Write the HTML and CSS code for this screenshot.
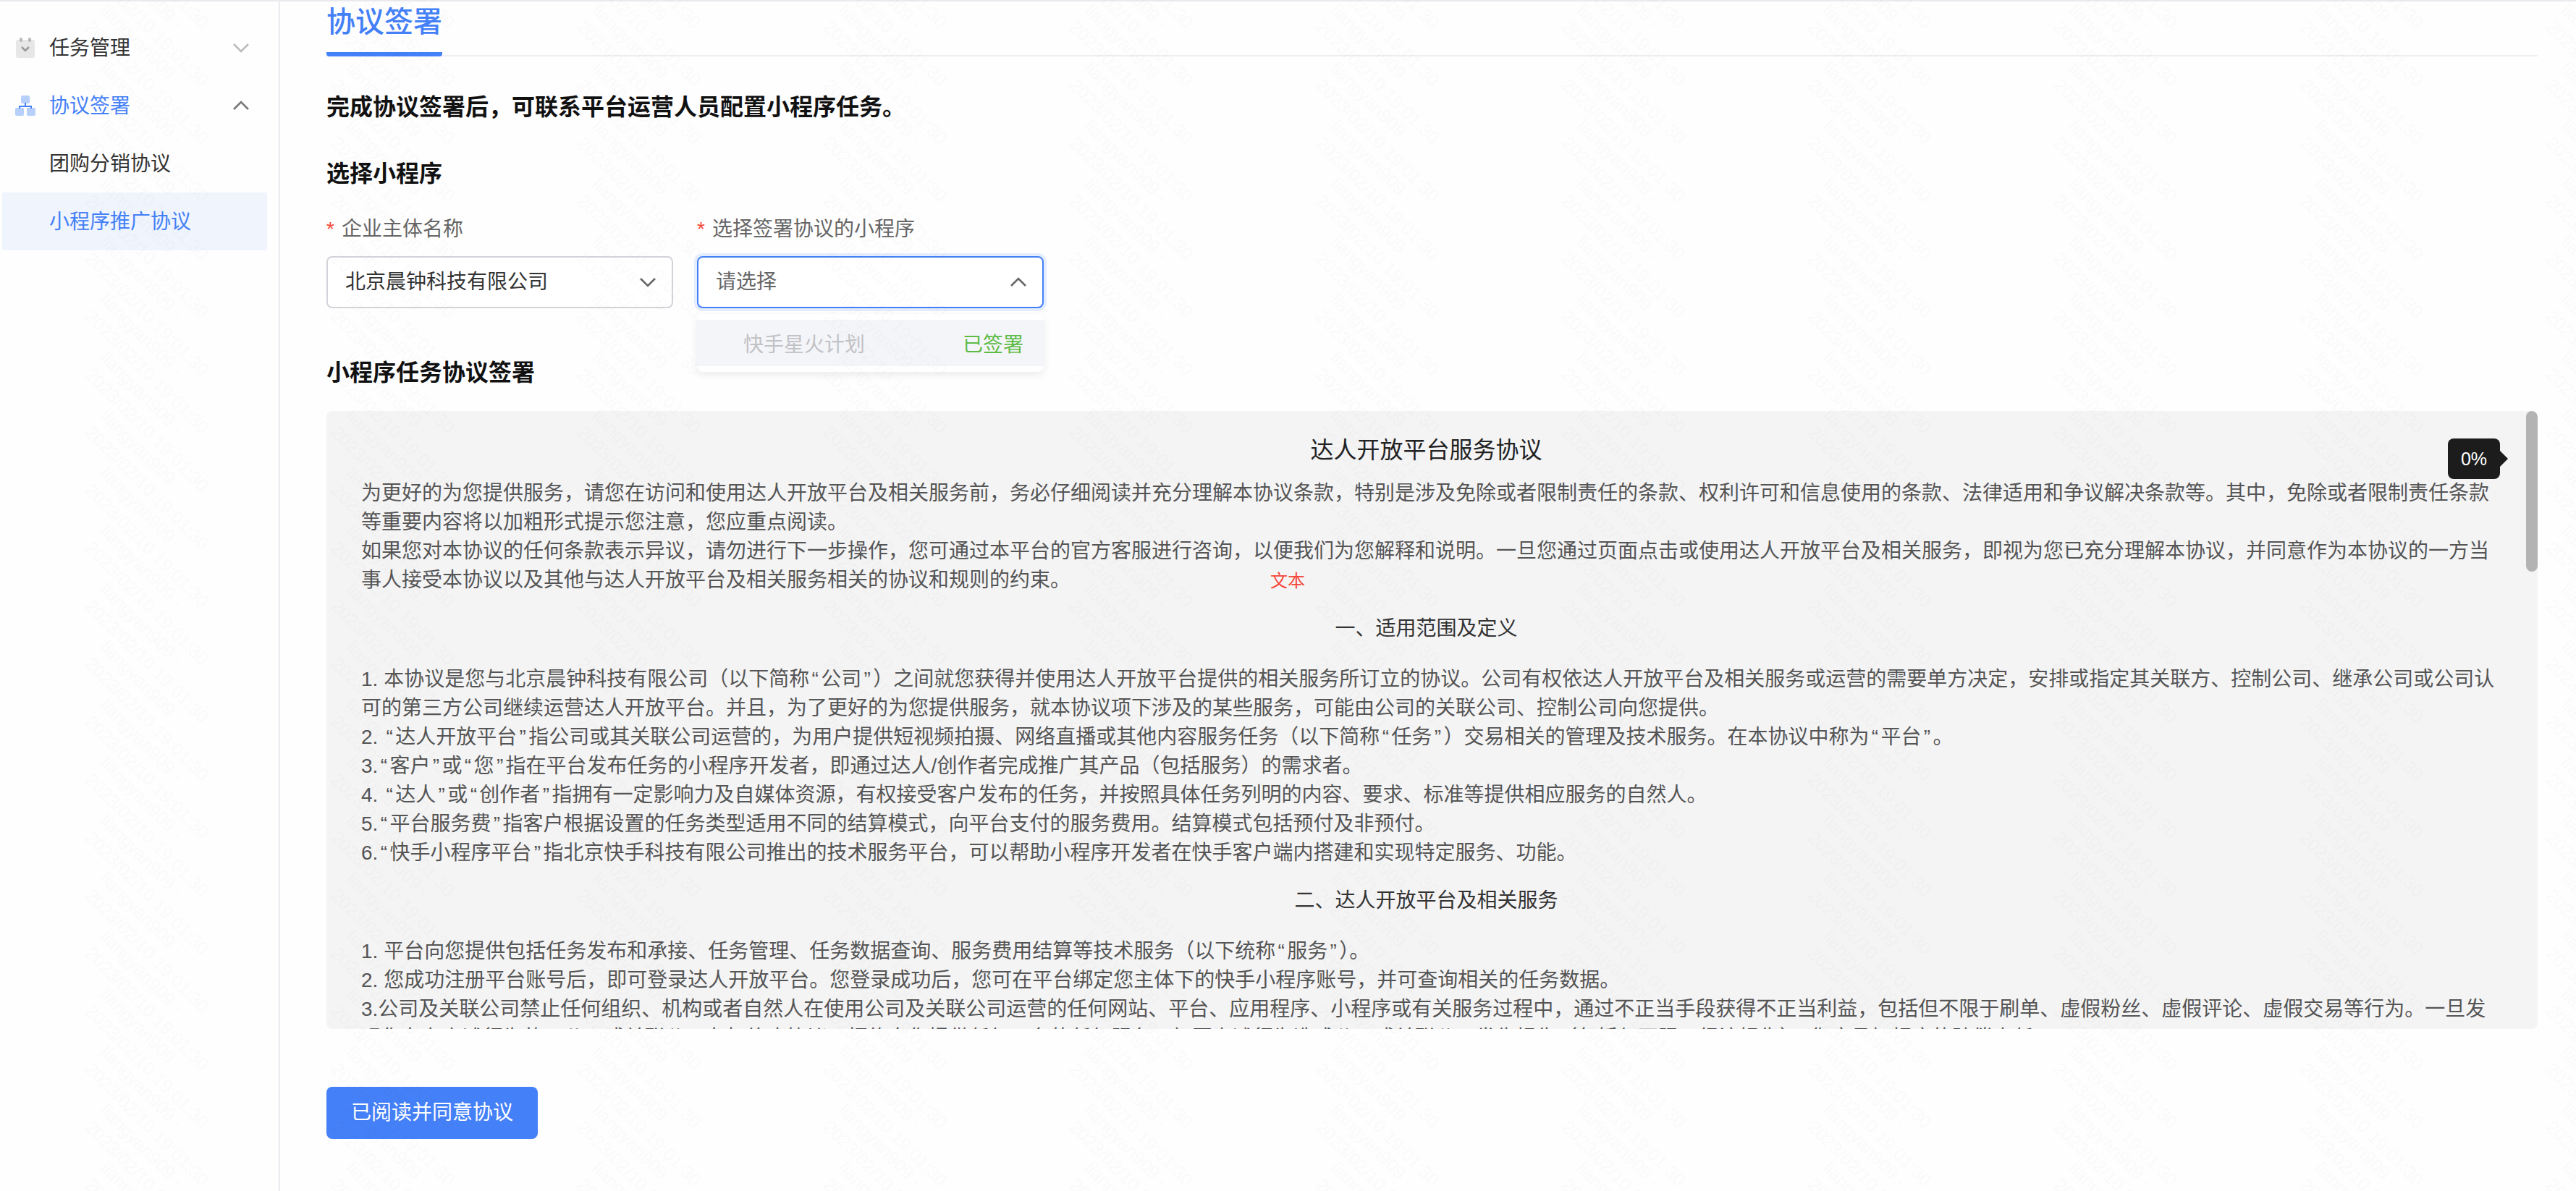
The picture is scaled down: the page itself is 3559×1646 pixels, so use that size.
FILE: index.html
```html
<!DOCTYPE html>
<html lang="zh-CN">
<head>
<meta charset="utf-8">
<title>协议签署</title>
<link rel="stylesheet" href="styles.css">
</head>
<body>
<div class="app">
  <aside class="sidebar">
    <div class="nav-item">
      <svg class="nav-icon" viewBox="0 0 28 28"><rect x="1" y="3" width="26" height="25" rx="3" fill="#e7e7e7"/><rect x="6" y="0" width="4" height="6" rx="2" fill="#b9b9b9"/><rect x="18" y="0" width="4" height="6" rx="2" fill="#b9b9b9"/><path d="M9 13l5 5 5-5" fill="none" stroke="#9a9a9a" stroke-width="2.6"/></svg>
      <span class="nav-label">任务管理</span>
      <svg class="nav-chevron" viewBox="0 0 24 14"><path d="M2 2l10 10L22 2" fill="none" stroke="#bcbcbc" stroke-width="2.6"/></svg>
    </div>
    <div class="nav-item nav-open">
      <svg class="nav-icon" viewBox="0 0 28 28"><rect x="8" y="0" width="12" height="11" rx="2" fill="#b6cffb"/><rect x="0" y="17" width="12" height="11" rx="2" fill="#b6cffb"/><rect x="16" y="17" width="12" height="11" rx="2" fill="#b6cffb"/><path d="M14 10v5M6 18v-3h16v3" fill="none" stroke="#4480f7" stroke-width="2"/></svg>
      <span class="nav-label">协议签署</span>
      <svg class="nav-chevron" viewBox="0 0 24 14"><path d="M2 12L12 2l10 10" fill="none" stroke="#777" stroke-width="2.6"/></svg>
    </div>
    <div class="nav-item"><span class="nav-label">团购分销协议</span></div>
    <div class="nav-item nav-active"><span class="nav-label">小程序推广协议</span></div>
  </aside>
  <main class="main">
    <header class="tabs"><div class="tab">协议签署</div></header>
    <p class="intro">完成协议签署后，可联系平台运营人员配置小程序任务。</p>
    <h2 class="section-title first">选择小程序</h2>
    <div class="fields">
      <div class="field">
        <div class="field-label"><span class="star">*</span>企业主体名称</div>
        <div class="select">
          <span class="select-value">北京晨钟科技有限公司</span>
          <svg class="select-chevron" viewBox="0 0 24 14"><path d="M2 2l10 10L22 2" fill="none" stroke="#666" stroke-width="2.6"/></svg>
        </div>
      </div>
      <div class="field">
        <div class="field-label"><span class="star">*</span>选择签署协议的小程序</div>
        <div class="select select-open">
          <span class="select-placeholder">请选择</span>
          <svg class="select-chevron" viewBox="0 0 24 14"><path d="M2 12L12 2l10 10" fill="none" stroke="#666" stroke-width="2.6"/></svg>
        </div>
        <div class="dropdown">
          <div class="option"><span class="option-name">快手星火计划</span><span class="option-tag">已签署</span></div>
        </div>
      </div>
    </div>
    <h2 class="section-title second">小程序任务协议签署</h2>
    <section class="doc">
      <div class="doc-body">
        <h3 class="doc-title">达人开放平台服务协议</h3>
        <p class="doc-p">为更好的为您提供服务，请您在访问和使用达人开放平台及相关服务前，务必仔细阅读并充分理解本协议条款，特别是涉及免除或者限制责任的条款、权利许可和信息使用的条款、法律适用和争议解决条款等。其中，免除或者限制责任条款等重要内容将以加粗形式提示您注意，您应重点阅读。</p>
        <p class="doc-p">如果您对本协议的任何条款表示异议，请勿进行下一步操作，您可通过本平台的官方客服进行咨询，以便我们为您解释和说明。一旦您通过页面点击或使用达人开放平台及相关服务，即视为您已充分理解本协议，并同意作为本协议的一方当事人接受本协议以及其他与达人开放平台及相关服务相关的协议和规则的约束。<span class="doc-mark">文本</span></p>
        <h4 class="doc-heading">一、适用范围及定义</h4>
        <p class="doc-p">1. 本协议是您与北京晨钟科技有限公司（以下简称<span class="qt">“</span>公司<span class="qt">”</span>）之间就您获得并使用达人开放平台提供的相关服务所订立的协议。公司有权依达人开放平台及相关服务或运营的需要单方决定，安排或指定其关联方、控制公司、继承公司或公司认可的第三方公司继续运营达人开放平台。并且，为了更好的为您提供服务，就本协议项下涉及的某些服务，可能由公司的关联公司、控制公司向您提供。</p>
        <p class="doc-p">2. <span class="qt">“</span>达人开放平台<span class="qt">”</span>指公司或其关联公司运营的，为用户提供短视频拍摄、网络直播或其他内容服务任务（以下简称<span class="qt">“</span>任务<span class="qt">”</span>）交易相关的管理及技术服务。在本协议中称为<span class="qt">“</span>平台<span class="qt">”</span>。</p>
        <p class="doc-p">3.<span class="qt">“</span>客户<span class="qt">”</span>或<span class="qt">“</span>您<span class="qt">”</span>指在平台发布任务的小程序开发者，即通过达人/创作者完成推广其产品（包括服务）的需求者。</p>
        <p class="doc-p">4. <span class="qt">“</span>达人<span class="qt">”</span>或<span class="qt">“</span>创作者<span class="qt">”</span>指拥有一定影响力及自媒体资源，有权接受客户发布的任务，并按照具体任务列明的内容、要求、标准等提供相应服务的自然人。</p>
        <p class="doc-p">5.<span class="qt">“</span>平台服务费<span class="qt">”</span>指客户根据设置的任务类型适用不同的结算模式，向平台支付的服务费用。结算模式包括预付及非预付。</p>
        <p class="doc-p">6.<span class="qt">“</span>快手小程序平台<span class="qt">”</span>指北京快手科技有限公司推出的技术服务平台，可以帮助小程序开发者在快手客户端内搭建和实现特定服务、功能。</p>
        <h4 class="doc-heading">二、达人开放平台及相关服务</h4>
        <p class="doc-p">1. 平台向您提供包括任务发布和承接、任务管理、任务数据查询、服务费用结算等技术服务（以下统称<span class="qt">“</span>服务<span class="qt">”</span>）。</p>
        <p class="doc-p">2. 您成功注册平台账号后，即可登录达人开放平台。您登录成功后，您可在平台绑定您主体下的快手小程序账号，并可查询相关的任务数据。</p>
        <p class="doc-p">3.公司及关联公司禁止任何组织、机构或者自然人在使用公司及关联公司运营的任何网站、平台、应用程序、小程序或有关服务过程中，通过不正当手段获得不正当利益，包括但不限于刷单、虚假粉丝、虚假评论、虚假交易等行为。一旦发现您存在上述行为的，公司或关联公司有权终止协议，拒绝向您提供任何平台的任何服务，如因上述行为造成公司或关联公司发生损失（包括但不限于经济损失），您应承担相应的赔偿责任。</p>
      </div>
      <div class="doc-thumb"></div>
      <div class="doc-tip">0%</div>
    </section>
    <button class="primary" type="button">已阅读并同意协议</button>
  </main>
</div>
<svg class="watermark" xmlns="http://www.w3.org/2000/svg" aria-hidden="true">
  <defs>
    <g id="wm-lines">
      <text transform="translate(116 39) rotate(45)">2023/02/10 19:01:30</text>
      <text transform="translate(137 16) rotate(45)">liangyan909 ·</text>
    </g>
    <pattern id="wm" width="340" height="80" patternUnits="userSpaceOnUse">
      <use href="#wm-lines" y="-240"/>
      <use href="#wm-lines" y="-160"/>
      <use href="#wm-lines" y="-80"/>
      <use href="#wm-lines"/>
      <use href="#wm-lines" y="80"/>
    </pattern>
  </defs>
  <rect width="100%" height="100%" fill="url(#wm)"/>
</svg>
</body>
</html>
```

FILE: styles.css
```css
* { box-sizing: border-box; }
html, body { margin: 0; padding: 0; height: 100%; }
body {
  position: relative;
  overflow: hidden;
  background: #fefefe;
  color: #333;
  font-family: "Liberation Sans", "Noto Sans CJK SC", sans-serif;
  font-size: 28px;
}
.app {
  display: flex;
  height: 100%;
  border-top: 2px solid #e9e9ee;
}
.sidebar {
  flex: 0 0 387px;
  padding: 24px 16px 0 3px;
  border-right: 2px solid #eaeaef;
}
.nav-item {
  display: flex;
  align-items: center;
  height: 80px;
  padding-left: 18px;
  padding-right: 24px;
}
.nav-icon { flex: 0 0 28px; width: 28px; height: 28px; margin-right: 19px; }
.nav-label { flex: 1; padding-top: 2px; line-height: 40px; color: #333; }
.nav-item:not(:has(.nav-icon)) { padding-left: 65px; }
.nav-chevron { width: 24px; height: 14px; }
.nav-open .nav-label, .nav-active .nav-label { color: #4480f7; }
.nav-active { background: #eff4fd; }
.main {
  flex: 1;
  min-width: 0;
  padding: 0 53px 0 64px;
}
.tabs { border-bottom: 2px solid #eeeef1; height: 76px; }
.tab {
  display: inline-block;
  height: 76px;
  width: 160px;
  color: #4480f7;
  font-size: 40px;
  font-weight: 500;
  line-height: 56px;
  border-bottom: 6px solid #4480f7;
  border-radius: 0 0 4px 4px;
  padding-bottom: 14px;
}
.intro {
  margin: 48px 0 0;
  font-size: 32px;
  font-weight: 600;
  line-height: 44px;
  color: #111;
}
.section-title {
  margin: 0;
  font-size: 32px;
  font-weight: 600;
  line-height: 44px;
  color: #111;
}
.section-title.first { margin-top: 48px; }
.section-title.second { margin-top: 67px; }
.fields { display: flex; gap: 33px; margin-top: 34px; }
.field { position: relative; width: 479px; }
.field-label { line-height: 42px; color: #666; }
.star { display: inline-block; width: 21px; color: #f5483b; }
.select {
  display: flex;
  align-items: center;
  justify-content: space-between;
  height: 72px;
  margin-top: 16px;
  padding: 0 21px 0 24px;
  background: #fff;
  border: 2px solid #d3d3da;
  border-radius: 8px;
  line-height: 40px;
}
.select-open {
  border-color: #4480f7;
  box-shadow: 0 0 0 4px #e4edfd;
}
.select-value { color: #333; }
.select-placeholder { color: #666; }
.select-chevron { width: 24px; height: 14px; }
.dropdown {
  position: absolute;
  top: 138px;
  left: 0;
  right: 0;
  padding: 8px 0;
  background: #fff;
  border-radius: 8px;
  box-shadow: 0 4px 12px rgba(0, 0, 0, .08);
}
.option {
  display: flex;
  justify-content: space-between;
  align-items: center;
  height: 64px;
  padding: 0 28px 0 64px;
  background: #f4f5f9;
}
.option-name { color: #c2c2c6; }
.option-tag { color: #5dbb46; }
.doc {
  position: relative;
  height: 854px;
  margin-top: 31px;
  background: #f4f4f5;
  border-radius: 8px;
  overflow: hidden;
}
.doc-body { padding: 34px 56px 0 48px; }
.doc-title {
  margin: 0 0 20px;
  font-size: 32px;
  font-weight: 400;
  line-height: 40px;
  text-align: center;
  color: #222;
}
.doc-heading {
  margin: 26px 8px 30px 0;
  font-size: 28px;
  font-weight: 400;
  line-height: 40px;
  text-align: center;
  color: #333;
}
.doc-title { margin-right: 8px; }
.doc-p { margin: 0; line-height: 40px; color: #555; }
.qt { padding: 0 .12em; }
.doc-mark { margin-left: 276px; font-size: 24px; color: #f5483b; }
.doc-thumb {
  position: absolute;
  top: 0;
  right: 0;
  width: 16px;
  height: 222px;
  background: #b3b3b3;
  border-radius: 8px;
}
.doc-tip {
  position: absolute;
  top: 38px;
  left: 2931px;
  width: 72px;
  height: 56px;
  background: #1c1c1c;
  border-radius: 8px;
  color: #fff;
  font-size: 25px;
  line-height: 56px;
  text-align: center;
}
.doc-tip::after {
  content: "";
  position: absolute;
  top: 17px;
  left: 100%;
  border-left: 11px solid #1c1c1c;
  border-top: 11px solid transparent;
  border-bottom: 11px solid transparent;
}
.primary {
  display: block;
  width: 292px;
  height: 72px;
  margin-top: 80px;
  padding: 0;
  background: #4480f7;
  border: 0;
  border-radius: 8px;
  color: #fff;
  font: inherit;
  line-height: 72px;
}
.watermark {
  position: absolute;
  inset: 0;
  width: 100%;
  height: 100%;
  pointer-events: none;
  font-family: "Liberation Sans", sans-serif;
  font-size: 25px;
  fill: rgba(0, 0, 0, .016);
}
```
